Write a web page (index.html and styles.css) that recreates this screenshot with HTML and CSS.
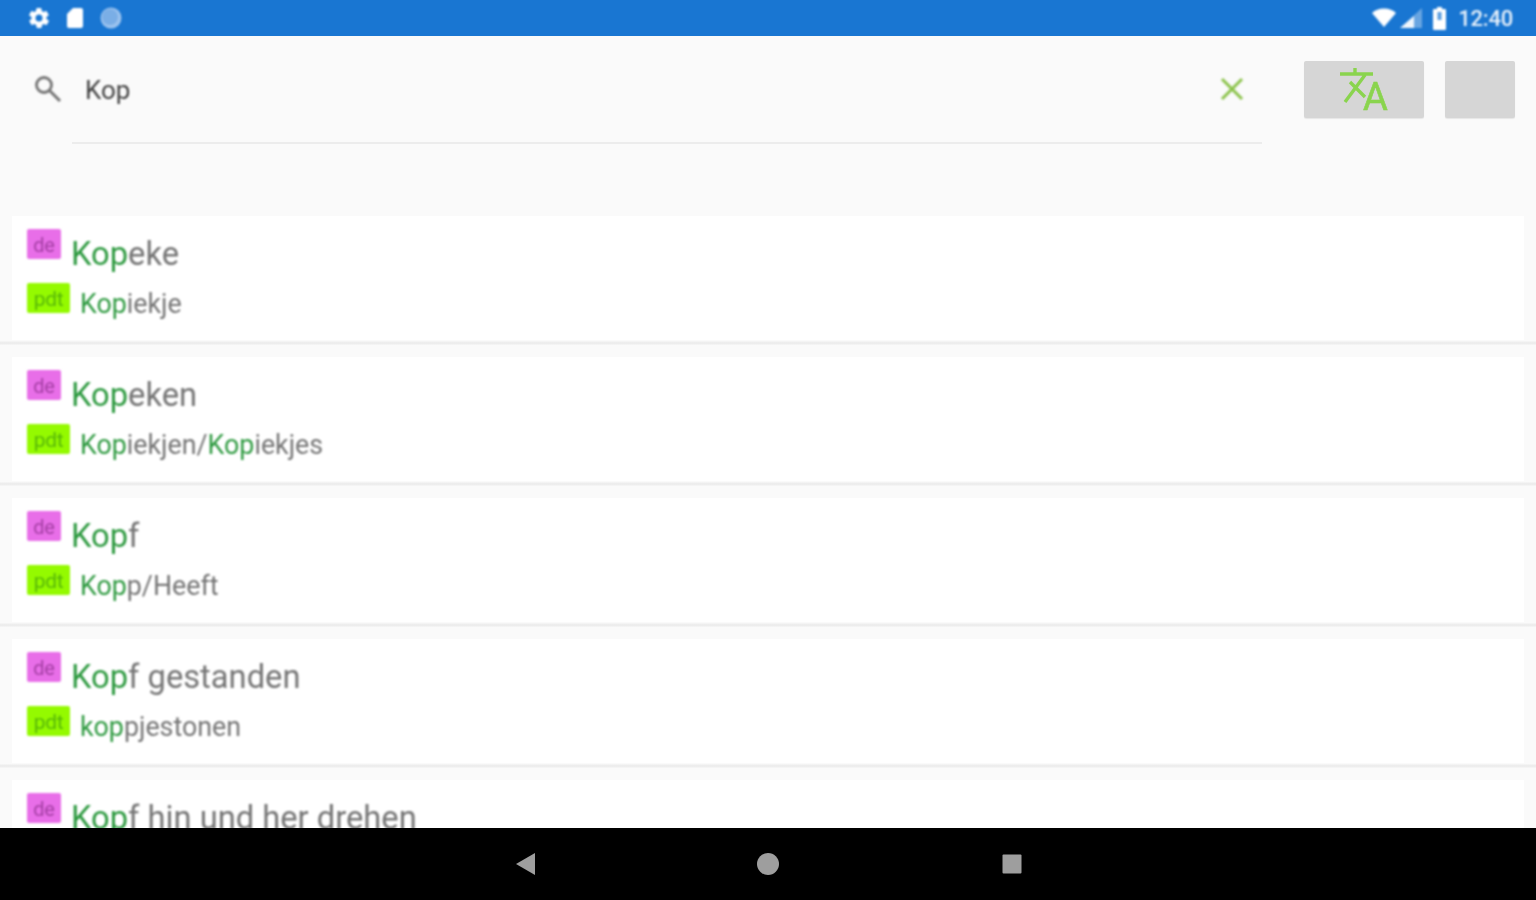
FILE: index.html
```html
<!DOCTYPE html>
<html lang="de">
<head>
<meta charset="utf-8">
<title>Wörterbuch</title>
<link rel="stylesheet" href="styles.css">
</head>
<body>
<div class="screen">
  <header class="status">
    <div class="status-group status-left">
      <svg width="24" height="24" viewBox="0 0 24 24"><path fill="#fff" d="M19.4 13a7.500 7.500 0 0 0 0-2l2.100-1.600a.5.5 0 0 0 .1-.6l-2-3.500a.5.5 0 0 0-.6-.2l-2.500 1a7.300 7.300 0 0 0-1.700-1l-.4-2.600a.5.5 0 0 0-.5-.4h-4a.5.5 0 0 0-.5.4l-.4 2.600a7.300 7.300 0 0 0-1.700 1l-2.500-1a.5.5 0 0 0-.6.2l-2 3.500a.5.5 0 0 0 .1.6L4.600 11a7.500 7.500 0 0 0 0 2l-2.100 1.600a.5.5 0 0 0-.1.6l2 3.500c.1.2.4.3.6.2l2.500-1c.5.4 1.100.7 1.700 1l.4 2.600c0 .2.2.4.5.4h4c.3 0 .5-.2.5-.4l.4-2.600c.6-.3 1.200-.6 1.700-1l2.500 1c.2.1.5 0 .6-.2l2-3.500a.5.5 0 0 0-.1-.6zM12 15.500a3.500 3.500 0 1 1 0-7 3.500 3.500 0 0 1 0 7z"/></svg>
      <svg width="24" height="24" viewBox="0 0 24 24"><path fill="#fff" d="M18 2h-8L4 8v12c0 1.100.9 2 2 2h12c1.100 0 2-.9 2-2V4c0-1.100-.9-2-2-2z"/></svg>
      <svg width="24" height="24" viewBox="0 0 24 24"><circle cx="12" cy="12" r="10.500" fill="#9cc3ee"/><circle cx="11" cy="11" r="8" fill="#7aaee6"/></svg>
    </div>
    <div class="status-group status-right">
      <svg class="wifi" width="24" height="20" viewBox="0 0 24 20"><path fill="#fff" d="M12 19 0 5C3 2 7 .5 12 .5S21 2 24 5z"/></svg>
      <svg class="signal" width="22" height="20" viewBox="0 0 22 20"><path fill="#fff" fill-opacity=".35" d="M22 0v20H0z"/><path fill="#fff" d="M14 8v12H0z" fill-opacity=".9"/></svg>
      <svg class="battery" width="13" height="23" viewBox="0 0 13 23"><path fill="#fff" d="M4 0h5v2h3a1 1 0 0 1 1 1v19a1 1 0 0 1-1 1H1a1 1 0 0 1-1-1V3a1 1 0 0 1 1-1h3z"/><rect x="4.500" y="5" width="4" height="8" fill="#5a9de0"/></svg>
      <span class="clock">12:40</span>
    </div>
  </header>

  <main class="app">
    <section class="search-area">
      <div class="search-box">
        <div class="search-row">
          <svg class="search-ic" width="28" height="28" viewBox="0 0 28 28"><circle cx="10" cy="10" r="7.500" fill="none" stroke="#757575" stroke-width="2.800"/><path d="M15.500 15.500 26 26" stroke="#757575" stroke-width="3" fill="none"/></svg>
          <span class="query">Kop</span>
          <svg class="clear" width="26" height="26" viewBox="0 0 26 26"><path d="M3 3l20 20M23 3 3 23" stroke="#8bc34a" stroke-width="3" fill="none"/></svg>
        </div>
        <div class="search-line"></div>
      </div>
      <button class="btn btn-wide" type="button" aria-label="Übersetzen">
        <svg width="50" height="60" viewBox="0 0 50 60"><path fill="none" stroke="#8ad44e" stroke-width="3.400" d="M1 14h33M16 8v6M6 42 26 15M11 22l15 15"/><text x="24" y="50" class="btn-a">A</text></svg>
      </button>
      <button class="btn btn-small" type="button" aria-label="Menü"></button>
    </section>

    <section class="list">
      <article class="entry">
        <div class="line line-top"><span class="badge badge-de">de</span><span class="term"><b>Kop</b>eke</span></div>
        <div class="line line-bottom"><span class="badge badge-pdt">pdt</span><span class="trans"><b>Kop</b>iekje</span></div>
      </article>
      <article class="entry">
        <div class="line line-top"><span class="badge badge-de">de</span><span class="term"><b>Kop</b>eken</span></div>
        <div class="line line-bottom"><span class="badge badge-pdt">pdt</span><span class="trans"><b>Kop</b>iekjen/<b>Kop</b>iekjes</span></div>
      </article>
      <article class="entry">
        <div class="line line-top"><span class="badge badge-de">de</span><span class="term"><b>Kop</b>f</span></div>
        <div class="line line-bottom"><span class="badge badge-pdt">pdt</span><span class="trans"><b>Kop</b>p/Heeft</span></div>
      </article>
      <article class="entry">
        <div class="line line-top"><span class="badge badge-de">de</span><span class="term"><b>Kop</b>f gestanden</span></div>
        <div class="line line-bottom"><span class="badge badge-pdt">pdt</span><span class="trans"><b>kop</b>pjestonen</span></div>
      </article>
      <article class="entry">
        <div class="line line-top"><span class="badge badge-de">de</span><span class="term"><b>Kop</b>f hin und her drehen</span></div>
      </article>
    </section>
  </main>

  <nav class="navbar">
    <svg width="24" height="24" viewBox="0 0 24 24"><path fill="#9e9e9e" d="M23 1v22L4 12z"/></svg>
    <svg width="24" height="24" viewBox="0 0 24 24"><circle cx="12" cy="12" r="11" fill="#9e9e9e"/></svg>
    <svg width="24" height="24" viewBox="0 0 24 24"><rect x="2.500" y="2.500" width="19" height="19" rx="1" fill="#9e9e9e"/></svg>
  </nav>
</div>
</body>
</html>
```

FILE: styles.css
```css
* { box-sizing: border-box; }
html, body { margin: 0; height: 100%; }
body { background: #fafafa; font-family: Roboto, "Liberation Sans", sans-serif; overflow: hidden; }

.screen { width: 1536px; height: 900px; display: flex; flex-direction: column; }

.status {
  flex: 0 0 36px;
  background: #1976d2;
  display: flex;
  justify-content: space-between;
  align-items: center;
  padding: 0 23px 0 27px;
}
.status-group { display: flex; align-items: center; filter: blur(.9px); }
.status-left { gap: 12px; }
.wifi { margin-right: 4px; }
.signal { margin-right: 11px; }
.battery { margin-right: 12px; }
.clock { color: #fff; font-size: 22px; font-weight: 500; letter-spacing: -.2px; opacity: .9; }

.app { flex: 1 1 auto; min-height: 0; display: flex; flex-direction: column; background: #fafafa; }

.search-area { flex: 0 0 180px; display: flex; align-items: flex-start; padding: 25px 21px 0 32px; }
.search-box { flex: 1 1 auto; margin-right: 42px; }
.search-row { display: flex; align-items: center; height: 58px; padding-right: 17px; filter: blur(.8px); }
.search-ic { flex: none; margin: -3px 23px 0 2px; }
.query { flex: 1 1 auto; font-size: 26px; color: #424242; }
.clear { flex: none; margin-top: -2px; }
.search-line { height: 2px; margin: 23px 0 0 40px; background: #ececec; }

.btn { border: 0; padding: 0; background: #d6d6d6; height: 57px; border-radius: 2px; display: flex; align-items: center; justify-content: center; box-shadow: 0 1px 1px rgba(0, 0, 0, .08); }
.btn svg { display: block; flex: none; filter: blur(.7px); }
.btn-a { font: 400 38px Roboto, sans-serif; fill: #8ad44e; stroke: #8ad44e; stroke-width: .6px; }
.btn-wide { flex: 0 0 120px; margin-right: 21px; }
.btn-small { flex: 0 0 70px; }

.list { flex: 1 1 auto; min-height: 0; overflow: hidden; display: flex; flex-direction: column; }

.entry {
  flex: 0 0 141px;
  padding: 13px 12px 0 27px;
  background:
    linear-gradient(#fff, #fff) 12px 0 / 1512px 124px no-repeat,
    linear-gradient(#f7f7f7, #eaeaea 50%, #f7f7f7) 0 125px / 100% 4px no-repeat;
}
.line { display: flex; align-items: flex-start; filter: blur(.9px); }
.line-top { height: 54px; }
.line-bottom { height: 40px; }

.badge { flex: none; height: 30px; border-radius: 2px; font-size: 20px; line-height: 32px; text-align: center; letter-spacing: -.3px; }
.badge-de { width: 34px; background: #e86ee8; color: #a43ea4; }
.badge-pdt { width: 43px; background: #94fa00; color: #58b808; font-size: 21px; }

.term { margin: 4px 0 0 10px; font-size: 32.700px; line-height: 42px; color: #757575; white-space: nowrap; }
.trans { margin: 4px 0 0 10px; font-size: 26.800px; line-height: 34px; color: #757575; white-space: nowrap; }
.term b, .trans b { font-weight: 400; color: #2e9a40; }

.navbar {
  flex: 0 0 72px;
  background: #000;
  display: grid;
  grid-template-columns: repeat(3, 24px);
  justify-content: center;
  column-gap: 220px;
  align-items: center;
}
```
